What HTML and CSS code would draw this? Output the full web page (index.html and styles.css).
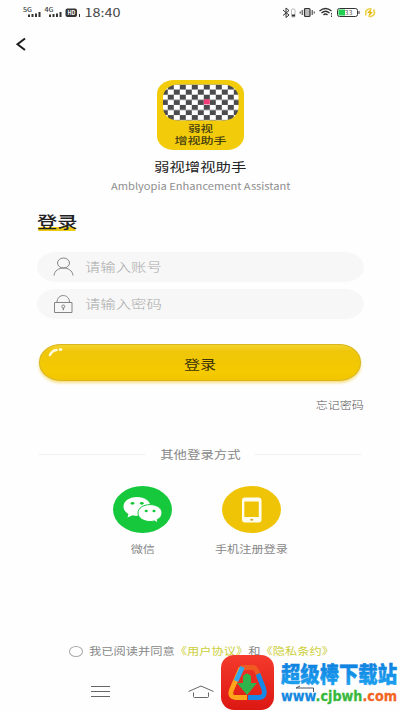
FILE: index.html
```html
<!DOCTYPE html>
<html lang="zh-CN">
<head>
<meta charset="utf-8">
<title>弱视增视助手</title>
<link rel="stylesheet" href="styles.css">
</head>
<body>
<main class="screen">
  <header class="status">
    <svg class="status-left" width="102" height="16" viewBox="0 0 102 16">
      <g fill="#333">
        <text x="0" y="6.500" font-size="6" font-weight="500" textLength="9" lengthAdjust="spacingAndGlyphs">5G</text>
        <path d="M5 9.500h2V12H5zM8.500 9h2v3h-2zM12 8.500h2V12h-2zM15.500 7h2v5h-2z"/>
        <text x="21.500" y="6.500" font-size="6" font-weight="500" textLength="9" lengthAdjust="spacingAndGlyphs">4G</text>
        <path d="M26 9.500h2V12h-2zM29.500 9h2v3h-2zM33 8.500h2V12h-2zM36.500 7h2v5h-2z"/>
        <rect x="42.500" y="3.500" width="11.500" height="8.500" rx="2"/>
        <text x="44.500" y="10.200" font-size="6" font-weight="700" fill="#fff" textLength="8" lengthAdjust="spacingAndGlyphs">HD</text>
        <path d="M56 9h1v3h-1z"/>
        <text x="61.500" y="12" font-size="11.500" fill="#444" textLength="36" lengthAdjust="spacingAndGlyphs">18:40</text>
      </g>
    </svg>
    <svg class="status-right" width="96" height="14" viewBox="0 0 96 14">
      <g fill="none" stroke="#333">
        <path d="M1 4l6 5-3 2.500V2l3 2.500-6 5"/>
        <rect x="9.500" y="3" width="3.500" height="8" rx="1" stroke="#aaa" stroke-width=".8"/>
        <path d="M10 9.500h3" stroke-width="2"/>
        <rect x="22.500" y="2.500" width="5.500" height="8" rx="1" fill="#bbb" stroke-width="1.200"/>
        <path d="M20.200 4v5M30.200 4v5M18.200 5.500v2M32.200 5.500v2"/>
        <path d="M37.500 5Q43.500 0 49.500 5M39.500 7Q43.500 3.500 47.500 7M41.500 9Q43.500 7 45.500 9" stroke-width="1.400"/>
        <path d="M49.500 7v1.500M49.500 9.500V11"/>
        <rect x="55.500" y="2.500" width="20" height="8" rx="2"/>
        <path d="M77 5v3"/>
        <path d="M84 9.500Q82 3 89 2.500M91.500 3.500Q95 9.500 87 10.800" stroke="#ecd04a" stroke-width="1.600"/>
      </g>
      <rect x="56.500" y="3.500" width="6.500" height="6" fill="#20d052"/>
      <text x="62.500" y="9" font-size="6" fill="#555" textLength="8" lengthAdjust="spacingAndGlyphs">33</text>
      <path d="M90 2l-5 5h2.500L86 11l5-5h-2.500z" fill="#e9b800"/>
    </svg>
  </header>

  <nav class="topbar">
    <svg width="12" height="14" viewBox="0 0 12 14"><path d="M10 1.500L2.500 7.300 10 13" fill="none" stroke="#1c1c1c" stroke-width="2"/></svg>
  </nav>

  <section class="brand">
    <svg width="87" height="70" viewBox="0 0 87 70">
      <defs>
        <pattern id="checks" x="4.800" y="4.500" width="12" height="10.200" patternUnits="userSpaceOnUse">
          <rect width="12" height="10.200" fill="#fff"/>
          <path d="M6 0h6v5.100H6zM0 5.100h6v5.100H0z" fill="#4b4b4d"/>
        </pattern>
      </defs>
      <rect width="87" height="70" rx="17" ry="14" fill="#f2cb0b"/>
      <rect x="6" y="4.500" width="75.500" height="36" rx="15" ry="13" fill="url(#checks)"/>
      <rect x="46.800" y="19.300" width="6" height="5.100" fill="#f43c78"/>
      <g class="logo-text" fill="#473f12">
        <text x="31" y="52.300" font-size="9" textLength="25" lengthAdjust="spacingAndGlyphs">弱视</text>
        <text x="17.500" y="63.500" font-size="9.500" textLength="52" lengthAdjust="spacingAndGlyphs">增视助手</text>
      </g>
    </svg>
    <h1><span class="wide">弱视增视助手</span></h1>
    <svg class="subtitle" width="180" height="14" viewBox="0 0 180 14"><text x="0" y="10" font-size="9.500" fill="#8e8e8e" textLength="179.500" lengthAdjust="spacingAndGlyphs">Amblyopia Enhancement Assistant</text></svg>
  </section>

  <form class="login">
    <h2><span class="wide">登录</span></h2>
    <div class="field">
      <svg width="21" height="20" viewBox="0 0 21 20"><g fill="none" stroke="#858585"><ellipse cx="10.500" cy="6" rx="6" ry="5"/><path d="M1 18.500C2 8.500 19 8.500 20 18.500"/></g></svg>
      <span class="wide">请输入账号</span>
    </div>
    <div class="field">
      <svg width="21" height="20" viewBox="0 0 21 20"><g fill="none" stroke="#858585"><path d="M1.500 8.500h17.500v10H1.500zM4 8.500C4-.8 16.500-.8 16.500 8.500"/><circle cx="10.300" cy="12.500" r="1.500"/><path d="M10.300 14v2.300" stroke-width="1.300"/></g></svg>
      <span class="wide">请输入密码</span>
    </div>
    <button class="submit" type="button">
      <svg class="shine" width="16" height="10" viewBox="0 0 16 10"><path d="M2 8Q4 3.500 8.500 3" fill="none" stroke="#fffbd8" stroke-width="2.600" stroke-linecap="round"/><ellipse cx="12.500" cy="2.500" rx="1.900" ry="1.500" fill="#fffbd8"/></svg>
      <span class="wide">登录</span>
    </button>
    <div class="forgot"><span class="wide">忘记密码</span></div>
  </form>

  <div class="divider"><i></i><span class="wide">其他登录方式</span><i></i></div>

  <section class="methods">
    <div class="method">
      <svg width="59" height="47" viewBox="0 0 59 47">
        <ellipse cx="29.500" cy="23.500" rx="29.500" ry="23.500" fill="#16c93c"/>
        <path d="M24 11c-8 0-13.500 4.300-13.500 9.600 0 3.200 1.900 5.600 5 7.400l-1 3.600 5-2.400c1.500.4 3 .5 4.500.5 7.500 0 13.500-4 13.500-9.300S31.500 11 24 11z" fill="#fff"/>
        <path d="M37 18.600c-6.800 0-12 3.600-12 8.400s5.200 8.500 12 8.500c1.600 0 3-.2 4.300-.6l3.700 2-.8-3.200c3-1.600 4.800-3.800 4.800-6.700 0-4.800-5.200-8.400-12-8.400z" fill="#fff" stroke="#16c93c"/>
        <g fill="#16c93c"><ellipse cx="19.500" cy="17.300" rx="1.900" ry="1.400"/><ellipse cx="28.800" cy="17.300" rx="1.900" ry="1.400"/><ellipse cx="33.200" cy="25" rx="1.600" ry="1.200"/><ellipse cx="41" cy="25" rx="1.600" ry="1.200"/></g>
      </svg>
      <span class="wide">微信</span>
    </div>
    <div class="method">
      <svg width="59" height="47" viewBox="0 0 59 47">
        <ellipse cx="29.500" cy="23.500" rx="29.500" ry="23.500" fill="#efc406"/>
        <rect x="20" y="11.500" width="19.500" height="25" rx="3" fill="#fffdf0"/>
        <path d="M22.300 15.500h14.500v15.500H22.300z" fill="#efc406"/>
        <ellipse cx="29.700" cy="33.800" rx="1.500" ry="1" fill="#c9a92b"/>
      </svg>
      <span class="wide">手机注册登录</span>
    </div>
  </section>

  <div class="agreement">
    <i class="radio"></i>
    <span class="wide">我已阅读并同意<a>《用户协议》</a>和<a>《隐私条约》</a></span>
  </div>

  <footer class="system-nav">
    <svg width="19" height="13" viewBox="0 0 19 13"><path d="M0 1.500h19M0 6.500h19M0 11.500h19" stroke="#666"/></svg>
    <svg width="26" height="14" viewBox="0 0 26 14"><path d="M.5 6.500L13 1l12.500 5.500M5.500 7.500v4q0 1 1 1h13q1 0 1-1v-4" fill="none" stroke="#666"/></svg>
    <svg width="20" height="14" viewBox="0 0 20 14"><path d="M5 1L1 3h17.500v4" fill="none" stroke="#4b5560"/></svg>
  </footer>

  <svg class="watermark" width="179" height="57" viewBox="0 0 179 57">
    <defs>
      <linearGradient id="red" x2="0" y2="1"><stop stop-color="#f43b2c"/><stop offset="1" stop-color="#dc1713"/></linearGradient>
      <linearGradient id="blue" x2="0" y2="1"><stop stop-color="#0878da"/><stop offset="1" stop-color="#20a5f2"/></linearGradient>
    </defs>
    <rect y="1" width="53" height="55" rx="13" fill="url(#red)"/>
    <g fill="none" stroke-width="4.800" stroke-linejoin="round">
      <path d="M20 14L10.500 36Q8 43.500 15 43.500h11" stroke="#ffa51c"/>
      <path d="M20 13.500h12q2 0 3 2l4 9" stroke="#f05a20"/>
      <path d="M37 20l5.500 14q3 9.500-5 9.500H27" stroke="#1688e8"/>
      <path d="M21.500 13L15 27" stroke="#35a9ee"/>
    </g>
    <path d="M22 22q4-5 8 0v7h6L26 41 16 29h6z" fill="#2fb34a"/>
    <g class="watermark-text">
      <text x="60" y="28" font-size="21.500" fill="url(#blue)" stroke="url(#blue)" stroke-width=".5" textLength="116" lengthAdjust="spacingAndGlyphs">超级棒下载站</text>
      <text class="url" x="60" y="46.500" font-size="14.500" textLength="116" lengthAdjust="spacingAndGlyphs"><tspan fill="#1488e0" stroke="#1488e0">www</tspan><tspan fill="#38b83c" stroke="#38b83c">.cjbwh</tspan><tspan fill="#f26522" stroke="#f26522">.com</tspan></text>
    </g>
  </svg>
</main>
</body>
</html>
```
FILE: styles.css
```css
* { box-sizing: border-box; }

body {
  margin: 0;
  background: #fefefe;
  font-family: "Noto Sans CJK SC", "Noto Sans", sans-serif;
}

.screen {
  position: relative;
  width: 400px;
  height: 711px;
  overflow: hidden;
  display: flex;
  flex-direction: column;
}

svg { display: block; flex: none; }

/* Horizontally expanded lettering used across the screen. */
.wide {
  display: inline-block;
  white-space: nowrap;
  transform: scaleX(1.24);
}

.status {
  height: 30px;
  padding: 5px 22px 0 23px;
  display: flex;
  justify-content: space-between;
}
.status-right { margin-top: 1px; }

.topbar { height: 50px; padding: 7px 0 0 15px; }

.brand {
  height: 127px;
  padding-left: 1px;
  display: flex;
  flex-direction: column;
  align-items: center;
}
.brand h1 {
  margin: 8px 0 0;
  font-size: 12.4px;
  line-height: 18px;
  font-weight: 400;
  color: #222;
}
.brand .subtitle { margin-top: 4px; }
.logo-text { font-weight: 500; }

.login {
  height: 223px;
  padding: 0 36px 0 37px;
  display: flex;
  flex-direction: column;
}
.login h2 {
  margin: 4px 0 0;
  height: 41px;
  font-size: 16.4px;
  line-height: 20px;
  font-weight: 500;
  color: #222;
}
.login h2 .wide {
  transform-origin: left;
  height: 20px;
  background: linear-gradient(#ecca12, #ecca12) 1px 16px / 30px 4px no-repeat;
}

.field {
  height: 30px;
  margin-bottom: 7px;
  padding-left: 16px;
  display: flex;
  align-items: center;
  gap: 10.5px;
  border-radius: 19px / 15px;
  background: #f7f7f7;
  font-size: 12.4px;
  font-weight: 300;
  color: #aaa;
}
.field .wide { transform-origin: left; }

.submit {
  position: relative;
  width: 322px;
  height: 37px;
  margin: 18px 0 0 2px;
  padding: 2px 0 0;
  border: 1px solid #d8b51c;
  border-radius: 22px / 18px;
  background: linear-gradient(#f4d32e, #efc60a 18%, #f5ca00 80%, #f1c400);
  box-shadow: 0 2px 3px #f7df84;
  font: 400 13px/20px "Noto Sans CJK SC", sans-serif;
  color: #3b3207;
}
.shine { position: absolute; left: 8px; top: 2px; }

.forgot {
  margin-top: 16px;
  text-align: right;
  font-size: 9.7px;
  line-height: 16px;
  font-weight: 300;
  color: #555;
}
.forgot .wide { transform-origin: right; }

.divider {
  height: 48px;
  padding: 0 39px;
  display: flex;
  justify-content: space-between;
  align-items: center;
  font-size: 10.8px;
  color: #888;
}
.divider i { width: 106px; height: 1px; background: #f0f0f0; }

.methods {
  height: 160px;
  padding: 8px 0 0 88px;
  display: flex;
}
.method {
  width: 109px;
  display: flex;
  flex-direction: column;
  align-items: center;
  gap: 8px;
  font-size: 9.8px;
  line-height: 16px;
  color: #888;
}

.agreement {
  height: 26px;
  padding-left: 69px;
  display: flex;
  align-items: center;
  gap: 6px;
  font-size: 9.9px;
  color: #888;
}
.agreement .wide { transform-origin: left; }
.agreement a { color: #cdcf3b; }
.radio {
  width: 14px;
  height: 11px;
  border: 1px solid #aaa;
  border-radius: 50%;
}

.system-nav {
  position: relative;
  z-index: 1;
  height: 47px;
  padding: 21px 85px 0 91px;
  display: flex;
  gap: 78px;
}
.system-nav svg:last-child { margin-left: 3px; }

.watermark { position: absolute; left: 221px; top: 654px; }
.watermark-text { font-weight: 900; }
.url { font-family: "DejaVu Sans", sans-serif; font-weight: 700; stroke-width: .3px; }
```
